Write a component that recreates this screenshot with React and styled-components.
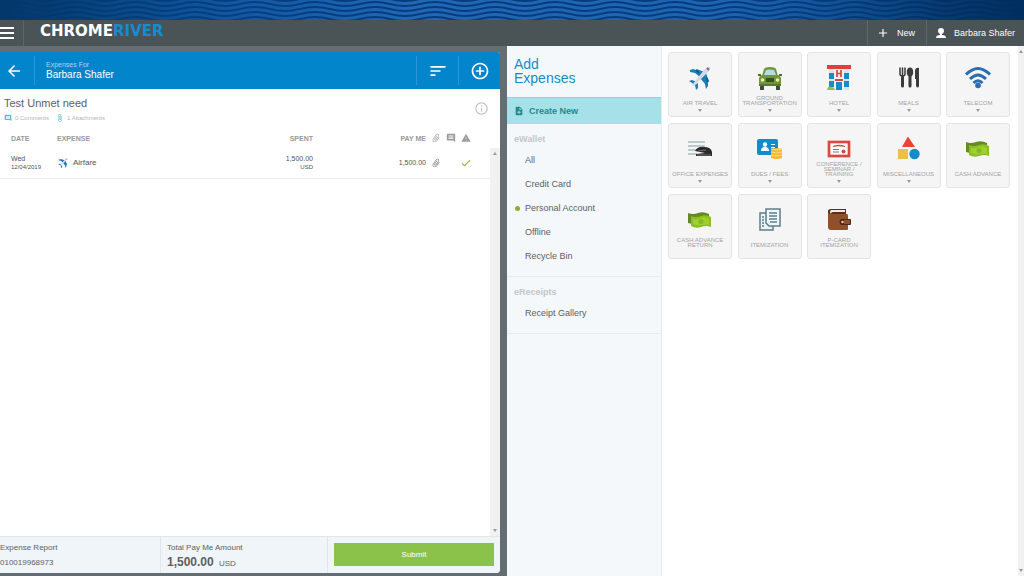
import React from 'react'
import styled, { createGlobalStyle } from 'styled-components'
import {
    MdArrowBack, MdSort, MdAddCircleOutline, MdInfoOutline, MdComment,
    MdAttachFile, MdWarning, MdCheck, MdAdd, MdNoteAdd
} from 'react-icons/md'

const GREY_ICON = '#9a9a9a'

const PlaneIcon = ({ size = 28 }) => (
    <svg width={size} height={size} viewBox="0 0 28 28">
        <path d="M4 6l3-1 3 1 1-1 2 1 6 2-5 5-5-4-5-1z" fill="#1b7fb5" />
        <path d="M20 9l2 6 1 2-1 1 0 4-2 3-1-5-5-6z" fill="#1b7fb5" />
        <path d="M3 17l3-1 5 2-2 3zM12 19l0 5-2 2-1-5z" fill="#1b7fb5" />
        <path d="M6 21L18 6q4-4 6-3 1 2-3 6L9 21q-2 2-3 0z" fill="#d3d9e6" />
        <path d="M10 6l3 3M21 14l1 4" stroke="#0d5680" strokeWidth="1.5" />
        <path d="M21 4l2 2" stroke="#6b6f86" strokeWidth="2" />
    </svg>
)

const CarIcon = () => (
    <svg width="28" height="28" viewBox="0 0 28 28">
        <path d="M4 20h4v6H4zM20 20h4v6h-4z" fill="#3f4a45" />
        <path d="M6 12L8 5q1-2 6-2t6 2l2 7z" fill="#6f9638" />
        <path d="M8 11l2-5q4-1 8 0l2 5z" fill="#b7dbe3" />
        <path d="M2 10h3v2H2zM23 10h3v2h-3z" fill="#4f7028" />
        <path d="M3 14q1-3 4-3h14q3 0 4 3v8H3z" fill="#6f9638" />
        <path d="M10 14h8v4h-8z" fill="#35521d" />
        <circle cx="6.500" cy="16" r="1.800" fill="#f0edb4" />
        <circle cx="21.500" cy="16" r="1.800" fill="#f0edb4" />
        <path d="M3 21h22" stroke="#587c2c" strokeWidth="2" />
    </svg>
)

const HotelIcon = () => (
    <svg width="28" height="28" viewBox="0 0 28 28">
        <path d="M4 4h20v22H4z" fill="#d9e3e8" />
        <path d="M2 1h24v4H2z" fill="#df4039" />
        <path d="M9 5h10v21H9z" fill="#eef1f2" />
        <path d="M12 6v7M16 6v7M12 9.500h4" stroke="#df4039" strokeWidth="1.700" />
        <path d="M4 9h5v6H4zM4 17h5v6H4zM19 9h5v6h-5zM19 17h5v6h-5z" fill="#168dca" />
        <path d="M11 18h6v8h-6z" fill="#168dca" />
        <path d="M10 15h8v2h-8z" fill="#df4039" />
        <path d="M2 26q1-5 4-3 3 0 4 3z" fill="#8bc53f" />
    </svg>
)

const MealsIcon = () => (
    <svg width="28" height="28" viewBox="0 0 28 28">
        <g fill="none" stroke="#3b3b3b" strokeLinecap="round">
            <path d="M5 4v6q0 2 2.500 2T10 10V4M7.500 4v8" strokeWidth="1.500" />
            <path d="M7.500 13v9M15 11v11" strokeWidth="3" />
        </g>
        <ellipse cx="15" cy="8" rx="3.200" ry="4.500" fill="#3b3b3b" />
        <path d="M20 6q1-3 4-2v18q-1 3-3 0v-7h-1z" fill="#3b3b3b" />
    </svg>
)

const WifiTileIcon = () => (
    <svg width="28" height="28" viewBox="0 0 28 28">
        <g fill="none" stroke="#2c6db0" strokeWidth="3">
            <path d="M2 10.500q12-12 24 0" />
            <path d="M6 15q8-8 16 0" />
            <path d="M9.500 19q4.500-4.500 9 0" />
        </g>
        <circle cx="14" cy="21.500" r="2.800" fill="#2c6db0" />
    </svg>
)

const StaplerIcon = () => (
    <svg width="28" height="28" viewBox="0 0 28 28">
        <path d="M2 7h17M2 11h17M2 15h9M2 19h9" stroke="#a9bcc1" strokeWidth="1.500" />
        <path d="M9 16q3-5 9-4 7 0 8 5v4H10v-2l9-1z" fill="#2b2b2b" />
        <path d="M12 16l8-1M11 20h14" stroke="#767676" strokeWidth="1" />
    </svg>
)

const DuesIcon = () => (
    <svg width="28" height="28" viewBox="0 0 28 28">
        <rect x="1" y="4" width="21" height="16" rx="2" fill="#118bce" />
        <circle cx="9" cy="9.500" r="2.200" fill="#fff" />
        <path d="M5 16q0-4 4-4t4 4zM15 9h4v1h-4zM15 12h4v1h-4z" fill="#fff" />
        <path d="M15 14q5-2 11 0v9q-5 2-11 0z" fill="#f8b72c" />
        <path d="M15 17q5 2 11 0M15 20q5 2 11 0M15 14q5 2 11 0" fill="none" stroke="#fbe08a" />
    </svg>
)

const CertificateIcon = () => (
    <svg width="28" height="28" viewBox="0 0 28 28">
        <rect x="4" y="7" width="20" height="14" fill="#fff" stroke="#dc4840" strokeWidth="2.700" />
        <path d="M8 11.500q6-2 12 0" fill="none" stroke="#dc4840" strokeWidth="1.300" />
        <path d="M8 14.500h6M8 17h6" stroke="#6f7c82" strokeWidth="1.200" />
        <circle cx="18.500" cy="16.500" r="2" fill="#dc4840" />
    </svg>
)

const ShapesIcon = () => (
    <svg width="28" height="28" viewBox="0 0 28 28">
        <path d="M12 3q1-2 2 0l6 9H7z" fill="#e74336" />
        <path d="M3 14h10v10H3z" fill="#f0bd45" />
        <circle cx="19.500" cy="19" r="5.200" fill="#158bc9" />
    </svg>
)

const CashIcon = () => (
    <svg width="28" height="28" viewBox="0 0 28 28">
        <path d="M2 7q5 2 10 0t11 1v10q-5-1-10 0t-11-1z" fill="#638a24" />
        <path d="M5 10q5 2 10 0t10 1v10q-5-2-10 0t-10-1z" fill="#8bbd24" />
        <path d="M7 13q4 1 8-1t8 1v6q-4-1-8 0t-8-1z" fill="#9fd12c" />
        <circle cx="15" cy="15.500" r="2.500" fill="#86b622" />
    </svg>
)

const PagesIcon = () => (
    <svg width="28" height="28" viewBox="0 0 28 28">
        <path d="M4 7h13v17H4z" fill="#e9f2f5" stroke="#5d7f8c" strokeWidth="1.500" />
        <path d="M6 11h2M6 14h2M6 17h2M6 20h2" stroke="#5d7f8c" strokeWidth="1.500" />
        <path d="M10 3h14v17H13l-3-3z" fill="#f2f8fa" stroke="#5d7f8c" strokeWidth="1.500" />
        <path d="M13 7h8M13 10h8M13 13h8M14 16h7" stroke="#5d7f8c" strokeWidth="1.300" />
    </svg>
)

const WalletIcon = () => (
    <svg width="28" height="28" viewBox="0 0 28 28">
        <path d="M3 5q0-2 3-2h15v6H3z" fill="#5c2f1b" />
        <path d="M6 4h14v2H8q-2 0-2 2-2-2 0-4z" fill="#f3ebe5" />
        <path d="M3 6q1 3 4 2h15q1 0 1 2v13q0 1-1 1H6q-3 0-3-3z" fill="#90502d" />
        <path d="M16 13h9q1 0 1 1v4q0 1-1 1h-9q-3-3 0-6z" fill="#4e2715" />
        <circle cx="17.500" cy="16" r="1.300" fill="#e5c197" />
        <path d="M19 14h6v4h-6z" fill="#90502d" />
    </svg>
)

const BustIcon = () => (
    <svg width="12" height="12" viewBox="0 0 12 12">
        <path
            d="M6 1q3 0 3 3 0 2-2 3v1q4 0 4 3H1q0-3 4-3V7Q3 6 3 4q0-3 3-3z"
            fill="#fff"
        />
    </svg>
)

const tiles = [
    { label: ['AIR TRAVEL'], icon: <PlaneIcon />, more: true },
    { label: ['GROUND', 'TRANSPORTATION'], icon: <CarIcon />, more: true },
    { label: ['HOTEL'], icon: <HotelIcon />, more: true },
    { label: ['MEALS'], icon: <MealsIcon />, more: true },
    { label: ['TELECOM'], icon: <WifiTileIcon />, more: true },
    { label: ['OFFICE EXPENSES'], icon: <StaplerIcon />, more: true },
    { label: ['DUES / FEES'], icon: <DuesIcon />, more: true },
    { label: ['CONFERENCE /', 'SEMINAR /', 'TRAINING'], icon: <CertificateIcon />, more: true },
    { label: ['MISCELLANEOUS'], icon: <ShapesIcon />, more: true },
    { label: ['CASH ADVANCE'], icon: <CashIcon /> },
    { label: ['CASH ADVANCE', 'RETURN'], icon: <CashIcon /> },
    { label: ['ITEMIZATION'], icon: <PagesIcon /> },
    { label: ['P-CARD', 'ITEMIZATION'], icon: <WalletIcon /> },
]

const wallet = ['All', 'Credit Card', 'Personal Account', 'Offline', 'Recycle Bin']

const Waves = () => (
    <svg width="100%" height="20" aria-hidden="true">
        <defs>
            <pattern id="wave" width="60" height="5" patternUnits="userSpaceOnUse">
                <path
                    d="M0 -1Q15 -5 30 -1T60 -1M0 4Q15 0 30 4T60 4M0 9Q15 5 30 9T60 9"
                    fill="none" stroke="#083a7c" strokeWidth="2"
                />
            </pattern>
            <linearGradient id="shade">
                <stop offset="0" stopColor="#02386c" />
                <stop offset="0.050" stopColor="#02386c" stopOpacity="0.900" />
                <stop offset="0.250" stopColor="#02458a" stopOpacity="0.400" />
                <stop offset="0.400" stopColor="#02458a" stopOpacity="0" />
                <stop offset="0.700" stopColor="#02458a" stopOpacity="0.100" />
                <stop offset="0.920" stopColor="#012e5f" stopOpacity="0.800" />
                <stop offset="1" stopColor="#012e5f" />
            </linearGradient>
        </defs>
        <rect width="100%" height="20" fill="#1f68b6" />
        <rect width="100%" height="20" fill="url(#wave)" />
        <rect width="100%" height="20" fill="url(#shade)" />
    </svg>
)

const Scrollbar = () => (
    <Gutter aria-hidden="true">
        <Triangle $up />
        <Triangle />
    </Gutter>
)

const ExpenseReport = () => (
    <Report>
        <Panel>
            <ReportHeader>
                <BackButton aria-label="Back"><MdArrowBack size={18} stroke="#fff" /></BackButton>
                <Owner>
                    <small>Expenses For</small>
                    <strong>Barbara Shafer</strong>
                </Owner>
                <HeaderButton aria-label="Sort"><MdSort size={20} /></HeaderButton>
                <HeaderButton aria-label="Add expense"><MdAddCircleOutline size={20} /></HeaderButton>
            </ReportHeader>
            <Summary>
                <div>
                    <Title>Test Unmet need</Title>
                    <Meta>
                        <MdComment size={8} color="#4bc3d6" />
                        <span>0 Comments</span>
                        <MdAttachFile size={8} color="#4bc3d6" />
                        <span>1 Attachments</span>
                    </Meta>
                </div>
                <InfoButton aria-label="Report details"><MdInfoOutline size={15} /></InfoButton>
            </Summary>
            <Content>
                <div>
                    <Table>
                        <thead>
                            <tr>
                                <Th $width={57} $first>DATE</Th>
                                <Th>EXPENSE</Th>
                                <Th $width={113} $right>SPENT</Th>
                                <Th $width={113} $right>PAY ME</Th>
                                <Th $width={15} $icon aria-label="Attachments"><Tilted><MdAttachFile size={10} color={GREY_ICON} /></Tilted></Th>
                                <Th $width={15} $icon aria-label="Comments"><MdComment size={10} color={GREY_ICON} /></Th>
                                <Th $width={32} $icon $last aria-label="Warnings"><MdWarning size={10} color={GREY_ICON} /></Th>
                            </tr>
                        </thead>
                        <tbody>
                            <tr>
                                <Td $first>Wed<Sub>12/04/2019</Sub></Td>
                                <Td><Category><PlaneIcon size={12} />Airfare</Category></Td>
                                <Td $right>1,500.00<Sub>USD</Sub></Td>
                                <Td $right>1,500.00</Td>
                                <Td $icon><Tilted><MdAttachFile size={10} color="#777" /></Tilted></Td>
                                <Td $icon />
                                <Td $icon $last><MdCheck size={12} color="#8fb93e" /></Td>
                            </tr>
                        </tbody>
                    </Table>
                </div>
                <ListScroll><Scrollbar /></ListScroll>
            </Content>
            <Footer>
                <FooterCell>
                    <span>Expense Report</span>
                    <span>010019968973</span>
                </FooterCell>
                <FooterCell $inset>
                    <span>Total Pay Me Amount</span>
                    <Total><b>1,500.00</b> USD</Total>
                </FooterCell>
                <SubmitCell><Submit>Submit</Submit></SubmitCell>
            </Footer>
        </Panel>
    </Report>
)

const App = () => (
    <Root>
        <GlobalStyle />
        <Banner><Waves /></Banner>
        <Toolbar>
            <MenuButton aria-label="Menu">
                <svg width="14" height="12" viewBox="0 0 14 12">
                    <path d="M0 1h14M0 6h14M0 11h14" stroke="#fff" strokeWidth="2" />
                </svg>
            </MenuButton>
            <Logo>CHROME<span>RIVER</span></Logo>
            <ToolButton><MdAdd size={14} stroke="#fff" />New</ToolButton>
            <ToolButton $user><BustIcon />Barbara Shafer</ToolButton>
        </Toolbar>
        <Body>
            <ExpenseReport />
            <AddExpenses>
                <Side>
                    <SideTitle>Add<br />Expenses</SideTitle>
                    <CreateNew><MdNoteAdd size={10} />Create New</CreateNew>
                    <Section>
                        <SectionTitle>eWallet</SectionTitle>
                        {wallet.map(name => (
                            <SideLink key={name} href="#" $active={name === 'Personal Account'}>{name}</SideLink>
                        ))}
                    </Section>
                    <Section>
                        <SectionTitle>eReceipts</SectionTitle>
                        <SideLink href="#">Receipt Gallery</SideLink>
                    </Section>
                </Side>
                <Tiles>
                    {tiles.map(({ label, icon, more }) => (
                        <Tile key={label.join(' ')}>
                            {icon}
                            <TileLabel>{label.map(line => <span key={line}>{line}</span>)}</TileLabel>
                            {more && <Triangle />}
                        </Tile>
                    ))}
                </Tiles>
                <Scrollbar />
            </AddExpenses>
        </Body>
    </Root>
)

export default App


const GlobalStyle = createGlobalStyle`
    * { box-sizing: border-box; }
    body {
        margin: 0;
        font-family: "Liberation Sans", Arial, sans-serif;
        font-size: 8px;
        color: #5c6063;
    }
    button {
        padding: 0;
        border: none;
        background: none;
        font: inherit;
        color: inherit;
        cursor: pointer;
    }
    svg { display: block; flex-shrink: 0; }
`
const Root = styled.div`
    display: flex;
    flex-direction: column;
    min-height: 100vh;
`
const Banner = styled.div`
    height: 20px;
    overflow: hidden;
`
const Toolbar = styled.header`
    display: flex;
    align-items: stretch;
    height: 26px;
    color: white;
    background-color: #4a5356;
`
const MenuButton = styled.button`
    && {
        display: flex;
        align-items: center;
        width: 24px;
        border-right: 1px solid #5b6467;
    }
`
const Logo = styled.div`
    flex: 1;
    padding-left: 16px;
    font-family: "DejaVu Sans", sans-serif;
    font-size: 15px;
    font-weight: bold;
    line-height: 23px;

    span { color: #168bd2; }
`
const ToolButton = styled.button`
    && {
        display: flex;
        align-items: center;
        gap: 7px;
        padding: 0 ${({ $user }) => $user ? 9 : 11}px 0 8px;
        border-left: 1px solid #5e676b;
        font-size: 9px;
    }
`
const Body = styled.main`
    flex: 1;
    display: grid;
    grid-template-columns: 507fr 517fr;
`
const Report = styled.section`
    display: flex;
    padding: 6px 7px 3px 0;
    background-color: #646d71;
`
const Panel = styled.div`
    flex: 1;
    display: flex;
    flex-direction: column;
    overflow: hidden;
    border-radius: 0 2px 4px 0;
    background-color: white;
`
const ReportHeader = styled.div`
    display: flex;
    height: 37px;
    padding: 4px 0;
    color: white;
    background-color: #0385cb;
`
const BackButton = styled.button`
    && {
        display: flex;
        align-items: center;
        width: 34px;
        padding-left: 5px;
    }
`
const Owner = styled.div`
    flex: 1;
    display: flex;
    flex-direction: column;
    justify-content: center;
    padding-left: 11px;
    border-left: 1px solid #2b98d4;

    small { font-size: 7px; line-height: 8px; color: #a8d6ef; }
    strong { font-size: 10px; line-height: 12px; font-weight: normal; }
`
const HeaderButton = styled.button`
    && {
        display: flex;
        align-items: center;
        justify-content: center;
        width: 42px;
        border-left: 1px solid #2b98d4;
    }
`
const Summary = styled.div`
    display: flex;
    justify-content: space-between;
    align-items: center;
    height: 39px;
    padding: 0 11px 0 4px;
`
const Title = styled.h1`
    margin: 0;
    font-size: 11px;
    font-weight: normal;
    line-height: 14px;
`
const Meta = styled.div`
    display: flex;
    align-items: center;
    gap: 3px;
    padding-top: 4px;
    font-size: 6px;
    line-height: 8px;
    color: #b4b4b4;

    span { margin-right: 4px; }
`
const InfoButton = styled.button`
    && { color: #c4c4c4; }
`
const Content = styled.div`
    flex: 1;
    display: grid;
    grid-template-columns: 1fr 10px;
`
const ListScroll = styled.div`
    display: flex;
    padding-top: 20px;
`
const Table = styled.table`
    width: 100%;
    table-layout: fixed;
    border-collapse: collapse;
`
const cell = ({ $first, $right, $icon, $last }) => `
    padding: 0 ${$last ? 17 : $right ? 2 : 0}px 0 ${$first ? 11 : 0}px;
    text-align: ${$right ? 'right' : 'left'};
    vertical-align: middle;
    ${$icon ? 'svg { margin: 0 auto; }' : ''}
`
const Th = styled.th`
    ${cell}
    width: ${({ $width }) => $width ? `${$width}px` : 'auto'};
    height: 20px;
    font-size: 7px;
    color: #999;
`
const Td = styled.td`
    ${cell}
    height: 30px;
    border-bottom: 1px solid #ececec;
    font-size: 7px;
    line-height: 8px;
    color: #505356;
`
const Sub = styled.div`
    font-size: 6px;
`
const Tilted = styled.div`
    svg { transform: rotate(35deg); }
`
const Category = styled.div`
    display: flex;
    align-items: center;
    gap: 4px;
    font-size: 8px;
`
const Footer = styled.footer`
    display: grid;
    grid-template-columns: 161fr 167fr 172fr;
    height: 37px;
    border-top: 1px solid #e3e7ea;
    background-color: #f0f5f9;
`
const FooterCell = styled.div`
    display: flex;
    flex-direction: column;
    gap: 4px;
    padding: 5px 0 0 ${({ $inset }) => $inset ? 6 : 0}px;
    border-right: 1px solid #e0e5e9;
    line-height: 11px;
`
const Total = styled.span`
    b { margin-right: 3px; font-size: 12px; }
`
const SubmitCell = styled.div`
    padding: 6px;
`
const Submit = styled.button`
    && {
        width: 100%;
        height: 23px;
        color: white;
        background-color: #8bc34a;
    }
`
const AddExpenses = styled.section`
    display: flex;
    background-color: white;
`
const Side = styled.aside`
    width: 30%;
    border-right: 1px solid #e6ecef;
    background-color: #f5f8fa;
`
const SideTitle = styled.h2`
    height: 51px;
    margin: 0;
    padding: 11px 0 0 7px;
    font-size: 14px;
    font-weight: normal;
    line-height: 14px;
    color: #168bcc;
`
const CreateNew = styled.button`
    && {
        display: flex;
        align-items: center;
        gap: 5px;
        width: 100%;
        height: 27px;
        padding-left: 7px;
        border-top: 1px solid #8fd3de;
        font-size: 9px;
        font-weight: bold;
        color: #23898c;
        background-color: #a6e0e9;
    }
`
const Section = styled.nav`
    padding: 7px 0 8px;
    border-bottom: 1px solid #e6ebee;
`
const SectionTitle = styled.h3`
    margin: 0;
    padding-left: 7px;
    font-size: 9px;
    line-height: 17px;
    color: #c3c7ca;
`
const SideLink = styled.a`
    display: flex;
    align-items: center;
    height: 24px;
    font-size: 9px;
    color: #5c6063;
    text-decoration: none;

    &::before {
        content: '';
        width: 5px; height: 5px;
        margin: 0 5px 0 8px;
        border-radius: 50%;
        background-color: ${({ $active }) => $active ? '#8aae2e' : 'transparent'};
    }
`
const Tiles = styled.div`
    flex: 1;
    display: grid;
    grid-template-columns: repeat(auto-fill, 64px);
    grid-auto-rows: 65px;
    justify-content: space-between;
    align-content: start;
    row-gap: 6px;
    padding: 6px 8px 6px 6px;
`
const Tile = styled.button`
    && {
        display: flex;
        flex-direction: column;
        align-items: center;
        padding-top: 11px;
        border: 1px solid #e4e4e4;
        border-radius: 3px;
        background-color: #f5f5f5;
    }
`
const TileLabel = styled.span`
    display: flex;
    flex-direction: column;
    justify-content: flex-end;
    align-items: center;
    height: 14px;
    margin-bottom: 3px;
    font-size: 6px;
    line-height: 5px;
    white-space: nowrap;
    color: #a3a3a3;
`
const Triangle = styled.span`
    width: 0; height: 0;
    border: 2px solid transparent;
    ${({ $up }) => $up ? 'border-bottom: 3px' : 'border-top: 3px'} solid #999;
    ${({ $up }) => $up ? 'border-top' : 'border-bottom'}: none;
`
const Gutter = styled.div`
    display: flex;
    flex-direction: column;
    justify-content: space-between;
    align-items: center;
    width: 100%;
    min-width: 6px;
    padding: 4px 0;
    background-color: #f1f1f1;

    ${AddExpenses} > & { width: 6px; }
`
